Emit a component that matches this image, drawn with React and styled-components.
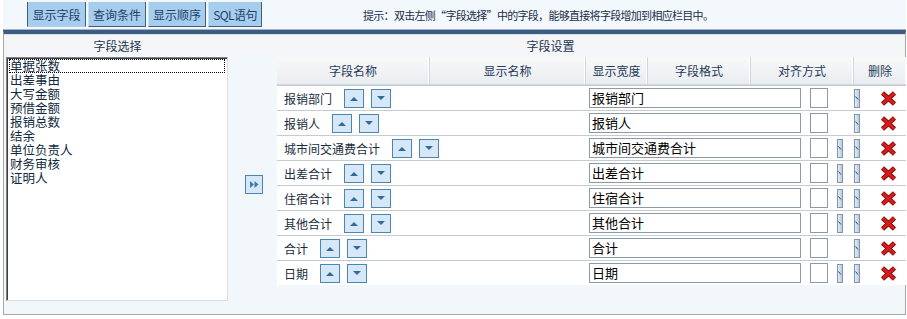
import styled, { createGlobalStyle } from "styled-components";

const GlobalStyle = createGlobalStyle`
  body {
    margin: 0;
    background: #fff;
    font-family: "Noto Sans CJK SC", "Noto Sans", sans-serif;
    font-size: 12px;
  }
`;

const Page = styled.div`
  width: 907px;
  height: 319px;
  padding: 0 1px 0 3px;
  box-sizing: border-box;
`;

const TopBar = styled.div`
  height: 30px;
  display: flex;
  align-items: center;
  padding-left: 24px;
  background: #f3f8fc;
  border-bottom: 1px solid #a3b2c0;
  box-sizing: border-box;
`;

const Tabs = styled.div`
  display: flex;
  gap: 2px;
  height: 25px;
`;

const Tab = styled.div`
  width: ${(p) => p.$w}px;
  height: 25px;
  display: flex;
  align-items: center;
  justify-content: center;
  background: #a7cdec;
  color: #1d3e6e;
  font-size: 12px;
  letter-spacing: ${(p) => (p.$tight ? "-0.6px" : "0")};
  border-left: 1px solid ${(p) => (p.$active ? "#3f5f82" : "#c8e0f4")};
  border-right: 1px solid #3f5f82;
  border-bottom: 1px solid ${(p) => (p.$active ? "#a7cdec" : "#3f5f82")};
  box-sizing: border-box;
`;

const Hint = styled.div`
  margin-left: 101px;
  color: #1a2c48;
  font-size: 11px;
  letter-spacing: -0.7px;
`;

const Panel = styled.div`
  border-top: 4px solid #3c5c84;
  border-left: 1px solid #a8a8a8;
  border-right: 1px solid #a8a8a8;
  border-bottom: 1px solid #a8a8a8;
  height: 285px;
  box-sizing: border-box;
  display: flex;
  flex-direction: column;
`;

const HeaderRow = styled.div`
  height: 21px;
  display: grid;
  grid-template-columns: 227px 1fr;
  background: #f4f5f6;
  border-top: 1px solid #d8dde2;
  box-sizing: border-box;
  color: #1f3450;
`;

const HeaderCell = styled.div`
  display: flex;
  align-items: center;
  justify-content: center;
  padding-right: ${(p) => p.$pr || 0}px;
`;

const Body = styled.div`
  flex: 1;
  display: grid;
  grid-template-columns: 227px 46px 629px;
  background: #f2f7fb;
  padding-top: 2px;
`;

const ListCell = styled.div`
  padding-left: 2px;
`;

const ListBox = styled.div`
  width: 222px;
  height: 244px;
  background: #fff;
  border-top: 1px solid #808080;
  border-left: 1px solid #808080;
  border-right: 1px solid #dcdcdc;
  border-bottom: 1px solid #dcdcdc;
  box-shadow: inset 1px 1px 0 #404040;
  box-sizing: border-box;
  padding: 1px 2px;
`;

const ListItem = styled.div`
  height: 14px;
  line-height: 14px;
  font-size: 12.5px;
  color: #0f2a40;
  padding-left: 1px;
  outline: ${(p) => (p.$focus ? "1px dotted #000" : "none")};
  outline-offset: -1px;
`;

const MiddleCell = styled.div`
  display: flex;
  align-items: center;
  justify-content: center;
  padding-bottom: 2px;
`;

const IconButton = styled.span`
  width: ${(p) => p.$w || 20}px;
  height: 19px;
  display: inline-flex;
  align-items: center;
  justify-content: center;
  background: #d6e8f7;
  border: 1px solid #4a86ae;
  box-sizing: border-box;
  margin-left: ${(p) => p.$ml || 0}px;
`;

const Table = styled.div`
  display: flex;
  flex-direction: column;
`;

const TableHead = styled.div`
  height: 27px;
  display: grid;
  grid-template-columns: 153px 156px 62px 103px 103px 52px;
  background: linear-gradient(#f8f8f8, #e9edf1);
  border-bottom: 1px solid #cfd6dd;
  color: #1f3a5a;
`;

const HeadCell = styled.div`
  display: flex;
  align-items: center;
  justify-content: center;
  border-right: 1px solid #d0d6dc;
  box-shadow: inset -1px 0 0 #fff;
  &:last-child {
    border-right: none;
  }
`;

const Row = styled.div`
  height: 25px;
  display: flex;
  align-items: center;
  background: #fff;
  border-top: 1px solid #c6cbd0;
  box-sizing: border-box;
  &:first-of-type {
    border-top: 1px solid #fff;
  }
`;

const NameCell = styled.div`
  width: 309px;
  padding-left: 7px;
  box-sizing: border-box;
  display: flex;
  align-items: center;
  color: #182c3e;
`;

const WidthInput = styled.div`
  width: 212px;
  height: 20px;
  margin-left: 3px;
  border: 1px solid #8a9aa8;
  box-sizing: border-box;
  font-size: 13px;
  line-height: 18px;
  padding-left: 2px;
  color: #000;
`;

const SmallBox = styled.div`
  width: 18px;
  height: 20px;
  margin-left: 9px;
  border: 1px solid #8a9aa8;
  box-sizing: border-box;
`;

const Stub = styled.div`
  width: 6px;
  height: 19px;
  margin-left: ${(p) => p.$ml}px;
  box-sizing: border-box;
  border: 1px solid #8096ae;
  background: linear-gradient(90deg, #e4ecf5, #b9cadd);
  visibility: ${(p) => (p.$hidden ? "hidden" : "visible")};
  display: flex;
  align-items: center;
  justify-content: center;
`;

const Delete = styled.div`
  margin-left: 20px;
  width: 17px;
  height: 15px;
  display: flex;
`;

const fields = [
  { name: "报销部门", stub: false },
  { name: "报销人", stub: false },
  { name: "城市间交通费合计", stub: true },
  { name: "出差合计", stub: true },
  { name: "住宿合计", stub: true },
  { name: "其他合计", stub: true },
  { name: "合计", stub: false },
  { name: "日期", stub: true },
];

const listItems = [
  "单据张数",
  "出差事由",
  "大写金额",
  "预借金额",
  "报销总数",
  "结余",
  "单位负责人",
  "财务审核",
  "证明人",
];

const Arrow = ({ up }) => (
  <svg width="8" height="5" viewBox="0 0 8 5">
    <polygon points={up ? "0,5 4,1 8,5" : "0,0 8,0 4,4"} fill="#2d6c9c" />
  </svg>
);

const StubMark = () => (
  <svg width="4" height="5" viewBox="0 0 4 5">
    <path d="M0.5 0.5 L3 3.5" stroke="#2b3f55" strokeWidth="1" />
  </svg>
);

const Cross = () => (
  <svg width="17" height="15" viewBox="0 0 17 15">
    <path d="M2.5 2 L14.5 13 M14.5 2 L2.5 13" stroke="#7c0a0a" strokeWidth="4.5" />
    <path d="M2.5 2 L14.5 13 M14.5 2 L2.5 13" stroke="#d81c1c" strokeWidth="3" />
  </svg>
);

const App = () => {
  return (
    <Page>
      <GlobalStyle />
      <TopBar>
        <Tabs>
          <Tab $active $w={59}>显示字段</Tab>
          <Tab $w={58}>查询条件</Tab>
          <Tab $w={58}>显示顺序</Tab>
          <Tab $w={54} $tight>SQL语句</Tab>
        </Tabs>
        <Hint>提示：双击左侧“字段选择”中的字段，能够直接将字段增加到相应栏目中。</Hint>
      </TopBar>
      <Panel>
        <HeaderRow>
          <HeaderCell>字段选择</HeaderCell>
          <HeaderCell $pr={35}>字段设置</HeaderCell>
        </HeaderRow>
        <Body>
          <ListCell>
            <ListBox>
              {listItems.map((item, i) => (
                <ListItem key={item} $focus={i === 0}>
                  {item}
                </ListItem>
              ))}
            </ListBox>
          </ListCell>
          <MiddleCell>
            <IconButton $w={18}>
              <svg width="9" height="7" viewBox="0 0 9 7">
                <polygon points="0,0 4,3.5 0,7" fill="#3a7ab0" />
                <polygon points="4.5,0 8.5,3.5 4.5,7" fill="#3a7ab0" />
              </svg>
            </IconButton>
          </MiddleCell>
          <Table>
            <TableHead>
              <HeadCell>字段名称</HeadCell>
              <HeadCell>显示名称</HeadCell>
              <HeadCell>显示宽度</HeadCell>
              <HeadCell>字段格式</HeadCell>
              <HeadCell>对齐方式</HeadCell>
              <HeadCell>删除</HeadCell>
            </TableHead>
            {fields.map((f) => (
              <Row key={f.name}>
                <NameCell>
                  {f.name}
                  <IconButton $ml={12}>
                    <Arrow up />
                  </IconButton>
                  <IconButton $ml={7}>
                    <Arrow />
                  </IconButton>
                </NameCell>
                <WidthInput>{f.name}</WidthInput>
                <SmallBox />
                <Stub $ml={9} $hidden={!f.stub}>
                  <StubMark />
                </Stub>
                <Stub $ml={11}>
                  <StubMark />
                </Stub>
                <Delete>
                  <Cross />
                </Delete>
              </Row>
            ))}
          </Table>
        </Body>
      </Panel>
    </Page>
  );
};

export default App;
